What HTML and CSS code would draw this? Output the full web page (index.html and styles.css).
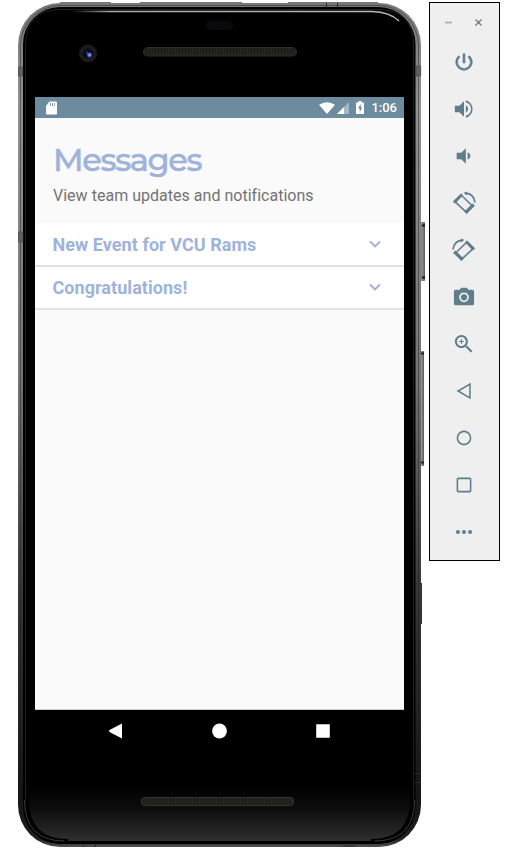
FILE: index.html
```html
<!DOCTYPE html>
<html lang="en">
<head>
<meta charset="utf-8">
<title>Messages</title>
<link rel="stylesheet" href="styles.css">
</head>
<body>
<main class="desktop">
  <section class="phone">
    <svg class="shell" width="409" height="848" viewBox="18 0 409 848" aria-hidden="true">
      <defs>
        <linearGradient id="rim" x1="0" y1="0" x2="0" y2="1">
          <stop offset="0" stop-color="#777"/><stop offset=".12" stop-color="#929292"/><stop offset=".45" stop-color="#747474"/><stop offset=".7" stop-color="#373737"/><stop offset=".94" stop-color="#151515"/><stop offset=".99" stop-color="#202020"/><stop offset="1" stop-color="#505050"/>
        </linearGradient>
        <linearGradient id="chin" x1="0" y1="0" x2="0" y2="1">
          <stop offset="0" stop-color="#000"/><stop offset=".4" stop-color="#0c0c0c"/><stop offset="1" stop-color="#2e2e2e"/>
        </linearGradient>
        <linearGradient id="shine">
          <stop offset="0" stop-color="#aaa" stop-opacity="0"/><stop offset=".12" stop-color="#aaa"/><stop offset="1" stop-color="#bbb"/>
        </linearGradient>
        <linearGradient id="key">
          <stop offset="0" stop-color="#444"/><stop offset=".5" stop-color="#929292"/><stop offset="1" stop-color="#555"/>
        </linearGradient>
        <pattern id="mesh" width="3" height="4" patternUnits="userSpaceOnUse">
          <rect width="3" height="4" fill="#1c1a17"/><path d="M1 0v4" stroke="#302d28" stroke-width="1"/>
        </pattern>
      </defs>
      <rect x="419" y="222" width="6" height="59" rx="1" fill="url(#key)"/>
      <path d="M422 225.500h3M422 277.500h3" stroke="#111" stroke-width="2"/>
      <rect x="419" y="351" width="5" height="115" rx="1" fill="url(#key)"/>
      <path d="M421 353.500h3M421 462.500h3" stroke="#222" stroke-width="2"/>
      <rect x="420" y="583" width="2" height="41" fill="#333"/>
      <rect x="18" y="3" width="403" height="844" rx="42" fill="url(#rim)"/>
      <path d="M60 2.500h51M140 2.500h102M288 2.500h90" stroke="#777"/>
      <rect x="20.500" y="5.500" width="398" height="838" rx="40" fill="none" stroke="#191919" stroke-opacity=".45"/>
      <rect x="23" y="7" width="392.500" height="837" rx="37" fill="#000"/>
      <path d="M28 785h384v20a36 36 0 0 1-36 36H64a36 36 0 0 1-36-36z" fill="url(#chin)"/>
      <path d="M27 60v740q0 41 41 41M412 60v740q0 41-41 41" fill="none" stroke="#000" stroke-width="4"/>
      <path d="M25.500 800V46Q25.500 9.500 61 9.500H378Q413.500 9.500 413.500 46V800" fill="none" stroke="#242424" stroke-opacity=".85"/>
      <path d="M24.500 800q0 41 40 41M414.500 800q0 41-40 41" fill="none" stroke="#3b3b3b"/>
      <path d="M71 11.500H372Q390 12 399 21" fill="none" stroke="url(#shine)" stroke-width="1.500"/>
      <path d="M18.300 67h4.500v9h-4.500zM416 66h4.700v10H416zM18.300 232H23v10h-4.700z" fill="#606060" stroke="#444" stroke-width=".6"/>
      <path d="M326.500 3v4M337.500 3v4M83.500 844v3M95.500 844v3M343 846h12M415 773.500h6M415 782.500h6" stroke="#2a2a2a"/>
      <rect x="206" y="21" width="27" height="9" rx="4.500" fill="#090a0d"/>
      <circle cx="88" cy="53.500" r="9" fill="#1c1a1a"/><circle cx="88" cy="53.500" r="5" fill="#080b22"/>
      <path d="M85 51l3 1v4z" fill="#203184"/><circle cx="89.500" cy="55" r="2.400" fill="#4b60b7"/><circle cx="89.500" cy="55" r="1" fill="#a7b6ee"/>
      <rect x="143.500" y="47.500" width="153" height="8.500" rx="4.250" fill="url(#mesh)" stroke="#302e2b"/>
      <rect x="141.500" y="797.500" width="152" height="8" rx="3" fill="url(#mesh)" stroke="#37342f"/>
    </svg>
    <div class="screen">
      <header class="status">
        <svg width="11" height="14" viewBox="0 0 11 14"><path d="M3.500.5H10q1 0 1 1v11q0 1-1 1H1q-1 0-1-1V5z" fill="#fff"/><path d="M4.500 2v3M6.500 2v3M8.500 2v3" stroke="#8ba3b3"/></svg>
        <div class="signals">
          <svg class="wifi" width="16" height="12" viewBox="0 0 16 12"><path d="M0 2.800Q8-2.500 16 2.800L8 12z" fill="#fff"/></svg>
          <svg class="cell" width="12" height="12" viewBox="0 0 12 12"><path d="M0 12 12 0v12z" fill="#a4b7c3"/><path d="M0 12 7 5v7z" fill="#fff"/></svg>
          <svg class="battery" width="8" height="13" viewBox="0 0 8 13"><path d="M2.500 0h3v1.500H8V13H0V1.500h2.500z" fill="#fff"/><path d="M4.800 3 2 7.500h1.700V11L6.300 6.500H4.800z" fill="#6d8b9e"/></svg>
          <span class="clock">1:06</span>
        </div>
      </header>
      <div class="intro">
        <h1>Messages</h1>
        <p>View team updates and notifications</p>
      </div>
      <div class="message"><h2>New Event for VCU Rams</h2><svg width="12" height="8" viewBox="0 0 12 8"><path d="m1 1.500 5 5 5-5" fill="none" stroke="#9fb3da" stroke-width="1.900"/></svg></div>
      <div class="message"><h2>Congratulations!</h2><svg width="12" height="8" viewBox="0 0 12 8"><path d="m1 1.500 5 5 5-5" fill="none" stroke="#9fb3da" stroke-width="1.900"/></svg></div>
    </div>
    <nav class="navigation">
      <svg width="16" height="16" viewBox="0 0 16 16"><path d="M14 .5v15L1.500 9Q.5 8 1.500 7z" fill="#fff"/></svg>
      <svg width="16" height="16" viewBox="0 0 16 16"><circle cx="7.500" cy="8" r="7.400" fill="#fff"/></svg>
      <svg width="16" height="16" viewBox="0 0 16 16"><rect x="1.200" y="1.200" width="13.600" height="13.600" rx=".5" fill="#fff"/></svg>
    </nav>
  </section>
  <aside class="toolbar">
    <div class="window-controls">
      <svg width="9" height="9" viewBox="0 0 9 9"><path d="M1 4.500h7" stroke="#a5b5bd" stroke-width="1.800"/></svg>
      <svg width="9" height="9" viewBox="0 0 9 9"><path d="m1.500 1.500 6 6m0-6-6 6" stroke="#607d8b" stroke-width="1.300"/></svg>
    </div>
    <div class="tool"><svg viewBox="0 0 24 24"><path d="M13 3h-2v10h2V3zm4.830 2.170-1.420 1.420A6.920 6.920 0 0 1 19 12a7 7 0 1 1-11.420-5.420L6.170 5.170A8.932 8.932 0 0 0 3 12a9 9 0 0 0 18 0c0-2.740-1.230-5.180-3.170-6.830z" stroke-width=".8" stroke="#607d8b"/></svg></div>
    <div class="tool"><svg viewBox="0 0 24 24"><path d="M2 8.500v7h5l5 5v-17l-5 5zm14.500 3.500A4.500 4.500 0 0 0 14 7.970v8.050A4.470 4.470 0 0 0 16.500 12zM14 2.500v2.400a7.300 7.300 0 0 1 0 14.200v2.400a9.800 9.800 0 0 0 0-19z"/></svg></div>
    <div class="tool"><svg viewBox="0 0 24 24"><path d="M19 12a4.500 4.500 0 0 0-3-4v8a4.470 4.470 0 0 0 3-4zM4 8.500v7h5l5 5v-17l-5 5z"/></svg></div>
    <div class="tool"><svg viewBox="0 0 24 24"><path class="line" d="m1.500 10 7-7 13 12.500-6.500 7z"/><path d="m0 11 9-9.500 2 2-8.500 9zM12.300 21.300l9-8.800L24 15l-9.500 9z"/><path class="line" d="M13 1.500q9.500-.5 11 10"/><path d="m11.500 1 4-1.500v4z"/></svg></div>
    <div class="tool"><svg viewBox="0 0 24 24"><path class="line" d="m22.500 10-7-7-13 12.500 6.500 7z"/><path d="m24 11-9-9.500-2 2 8.500 9zM11.700 21.300l-9-8.800L0 15l9.500 9z"/><path class="line" d="M11 1.500Q1.500 1 0 11.500"/><path d="m12.500 1-4-1.500v4z"/></svg></div>
    <div class="tool"><svg viewBox="0 0 24 24"><path fill-rule="evenodd" d="M9 2 7.170 4H3a2 2 0 0 0-2 2v13a2 2 0 0 0 2 2h18a2 2 0 0 0 2-2V6a2 2 0 0 0-2-2h-4.170L15 2zM12 7a5.300 5.300 0 1 1 0 10.600A5.300 5.300 0 0 1 12 7z"/><circle cx="12" cy="12.300" r="3.400"/></svg></div>
    <div class="tool"><svg viewBox="0 0 24 24"><path d="M15.500 14h-.79l-.28-.27A6.500 6.500 0 1 0 13.730 14.430l.27.280v.790l5 4.990L20.490 19zM9.500 14a4.500 4.500 0 1 1 0-9 4.500 4.500 0 0 1 0 9zM12 10h-2v2H9v-2H7V9h2V7h1v2h2z" transform="translate(-1.200 -1) scale(1.090)"/></svg></div>
    <div class="tool"><svg viewBox="0 0 24 24"><path class="line" d="M18.500 4.500v15L5.500 12z"/></svg></div>
    <div class="tool"><svg viewBox="0 0 24 24"><circle class="line" cx="12" cy="12" r="7.200"/></svg></div>
    <div class="tool"><svg viewBox="0 0 24 24"><rect class="line" x="4.800" y="4.800" width="14.400" height="14.400" rx="1"/></svg></div>
    <div class="tool"><svg viewBox="0 0 24 24"><circle cx="5.400" cy="12" r="2.200"/><circle cx="12" cy="12" r="2.200"/><circle cx="18.600" cy="12" r="2.200"/></svg></div>
  </aside>
</main>
</body>
</html>
```

FILE: styles.css
```css
* { box-sizing: border-box; }
body { margin: 0; background: #fff; font-family: Roboto, "Liberation Sans", sans-serif; }
svg { display: block; flex: none; }
.desktop { display: flex; align-items: flex-start; width: 509px; height: 863px; padding-left: 18px; }
.phone { position: relative; isolation: isolate; width: 411px; height: 848px; padding: 97px 25px 0 17px; }
.shell { position: absolute; inset: 0 auto auto 0; z-index: -1; }
.screen { height: 613px; background: #fafafa; border-bottom: 1px solid #c8cfcb; }
.status { display: flex; align-items: center; justify-content: space-between; height: 21px; padding: 0 7px 0 10.500px; background: #6d8b9e; }
.signals { display: flex; align-items: center; }
.cell { margin-left: 2px; }
.battery { margin-left: 7px; }
.clock { margin-left: 7px; color: #fff; font-size: 13px; line-height: 21px; font-weight: 500; }
.intro { height: 105px; padding: 23px 18px 0; }
h1, h2, p { margin: 0; white-space: nowrap; }
h1 { color: #9fb3da; font: 500 32px/38px Montserrat, Inter, sans-serif; letter-spacing: -1.350px; -webkit-text-stroke: .5px #9fb3da; }
p { margin-top: 6px; color: #737373; font-size: 16px; line-height: 22px; letter-spacing: .02px; }
.message { display: flex; align-items: center; justify-content: space-between; height: 44px; padding: 1px 23.500px 0 17.500px; background: #fff; border-bottom: 2px solid #e2e2e2; }
.message + .message { height: 43px; }
h2 { color: #9fb3da; font-size: 18px; line-height: 24px; font-weight: 700; letter-spacing: .05px; }
.message svg { margin-bottom: 2px; }
.navigation { display: flex; justify-content: space-between; padding: 13px 73px 0; height: 40px; }
.toolbar { width: 71px; height: 559px; margin-top: 2px; border: 1px solid #000; background: #efefef; padding-top: 15px; }
.window-controls { display: flex; justify-content: space-between; padding: 0 16px 0 14px; height: 20px; }
.tool { display: grid; place-items: center; height: 47px; padding-right: 1px; }
.tool svg { width: 22px; height: 22px; fill: #607d8b; overflow: visible; }
.tool .line { fill: none; stroke: #607d8b; stroke-width: 1.700; }
```
